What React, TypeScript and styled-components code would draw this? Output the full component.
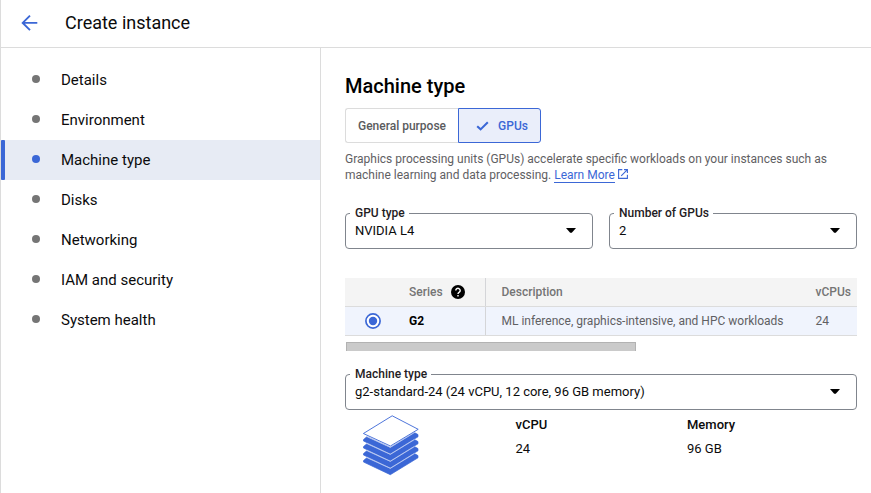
import React from "react";
import styled, { createGlobalStyle, css } from "styled-components";

const BLUE = "#3b67d6";

const GlobalStyle = createGlobalStyle`
  * { box-sizing: border-box; }
  body {
    margin: 0;
    background: #fff;
    color: #0b0b0c;
    font-family: Roboto, "Liberation Sans", sans-serif;
    overflow: hidden;
  }
`;

const Page = styled.div`
  display: flex;
  flex-direction: column;
  height: 493px;
  border-left: 1px solid #dcdcdc;
`;

const Header = styled.header`
  display: flex;
  align-items: center;
  height: 48px;
  padding: 0 0 2px 20px;
  border-bottom: 1px solid #dcdcdc;
`;

const BackIcon = styled.svg`
  width: 17px;
  height: 17px;
  margin-right: 27px;
`;

const HeaderTitle = styled.h1`
  margin: 0;
  font-size: 18px;
  font-weight: 400;
  line-height: 24px;
`;

const Body = styled.div`
  display: flex;
  flex: 1;
  min-height: 0;
`;

const Sidebar = styled.nav`
  width: 320px;
  flex: none;
  padding-top: 12px;
  border-right: 1px solid #dcdcdc;
`;

const NavItem = styled.a<{ $active?: boolean }>`
  display: flex;
  align-items: center;
  height: 40px;
  font-size: 15px;
  ${(p) => p.$active && css`background: #e7ebf4;`}
`;

const ActiveBar = styled.span<{ $active?: boolean }>`
  width: 4px;
  height: 40px;
  border-radius: 1px;
  background: ${(p) => (p.$active ? BLUE : "transparent")};
`;

const Dot = styled.span<{ $active?: boolean }>`
  width: 8px;
  height: 8px;
  margin: 0 21px 2px 27px;
  border-radius: 50%;
  background: ${(p) => (p.$active ? BLUE : "#757575")};
`;

const Main = styled.main`
  width: 536px;
  padding: 26px 0 0 24px;
`;

const Title = styled.h2`
  margin: 0;
  font-size: 20px;
  font-weight: 500;
  line-height: 24px;
  color: #000;
`;

const Toggle = styled.div`
  display: flex;
  margin-top: 10px;
`;

const ToggleButton = styled.button<{ $selected?: boolean }>`
  display: flex;
  align-items: center;
  justify-content: center;
  height: 35px;
  width: ${(p) => (p.$selected ? 83 : 113)}px;
  padding: 0;
  border: 1px solid ${(p) => (p.$selected ? BLUE : "#dcdcdc")};
  border-right-width: ${(p) => (p.$selected ? 1 : 0)}px;
  border-radius: ${(p) => (p.$selected ? "0 3px 3px 0" : "3px 0 0 3px")};
  background: ${(p) => (p.$selected ? "#eaeefa" : "#fff")};
  color: ${(p) => (p.$selected ? BLUE : "#5a5b5e")};
  font: 500 12px Roboto, sans-serif;
`;

const CheckIcon = styled.svg`
  width: 13px;
  height: 10px;
  margin: 0 9px 0 5px;
`;

const Description = styled.p`
  margin: 8px 0 0;
  color: #5f6063;
  font-size: 12px;
  line-height: 16px;
  white-space: nowrap;
`;

const LearnMore = styled.a`
  color: ${BLUE};
  border-bottom: 1px solid ${BLUE};
`;

const ExternalIcon = styled.svg`
  width: 10px;
  height: 10px;
  margin-left: 3px;
`;

const SelectRow = styled.div`
  display: grid;
  grid-template-columns: 1fr 1fr;
  gap: 16px;
  margin-top: 30px;
`;

const Select = styled.div`
  position: relative;
  display: flex;
  align-items: center;
  justify-content: space-between;
  height: 36px;
  padding: 0 16px 1px 9px;
  border: 1px solid #80858d;
  border-radius: 4px;
  font-size: 13px;
`;

const SelectLabel = styled.span`
  position: absolute;
  top: -8px;
  left: 4px;
  padding: 0 4px 0 5px;
  background: #fff;
  font-size: 12px;
  font-weight: 500;
  line-height: 14px;
  color: #1f2023;
`;

const Caret = styled.svg`
  width: 10px;
  height: 5px;
`;

const Table = styled.div`
  margin-top: 29px;
  font-size: 12px;
  color: #5f6063;
`;

const Row = styled.div<{ $head?: boolean }>`
  display: grid;
  grid-template-columns: 64px 77px 329.5px 1fr;
  height: 29px;
  border-bottom: 1px solid #dcdcdc;
  background: ${(p) => (p.$head ? "#f4f4f4" : "#f0f4fd")};
  font-weight: ${(p) => (p.$head ? 500 : 400)};
  color: ${(p) => (p.$head ? "#757575" : "#5f6063")};
`;

const Cell = styled.div<{ $divider?: boolean; $strong?: boolean }>`
  display: flex;
  align-items: center;
  white-space: nowrap;
  ${(p) => p.$divider && css`border-right: 1px solid #d4d5d8;`}
  ${(p) => p.$strong && css`color: #000; font-weight: 700;`}
`;

const DescCell = styled(Cell)`
  padding-left: 15.5px;
`;

const RadioCell = styled(Cell)`
  padding-left: 20px;
`;

const HelpIcon = styled.svg`
  width: 14px;
  height: 14px;
  margin-left: 8px;
`;

const Radio = styled.svg`
  width: 16px;
  height: 16px;
`;

const Scrollbar = styled.div`
  width: 290px;
  height: 9px;
  margin: 6px 0 23px 1px;
  background: #cacaca;
  border: 1px solid #b2b2b2;
  border-bottom: 0;
`;

const Specs = styled.div`
  display: grid;
  grid-template-columns: 170.5px 171.5px 1fr;
  padding-top: 5px;
`;

const Spec = styled.div`
  padding-top: 1px;
  font-size: 13px;
  line-height: 18px;
`;

const SpecName = styled.div`
  margin-bottom: 6px;
  font-weight: 500;
`;

const StackIcon = styled.svg`
  width: 58px;
  height: 61px;
  margin-left: 17px;
`;

const steps = [
  "Details",
  "Environment",
  "Machine type",
  "Disks",
  "Networking",
  "IAM and security",
  "System health",
];

function SelectField({ label, value }: { label: string; value: string }) {
  return (
    <Select>
      <SelectLabel>{label}</SelectLabel>
      {value}
      <Caret viewBox="0 0 10 5">
        <path d="M0 0h10L5.8 4.8H4.2z" fill="#000" />
      </Caret>
    </Select>
  );
}

export default function App() {
  return (
    <>
      <GlobalStyle />
      <Page>
        <Header>
          <BackIcon viewBox="0 0 17 17" fill="none" stroke={BLUE} strokeWidth="1.9">
            <path d="M16.3 8.9H2M9 1.6 1.7 8.9 9 16.2" />
          </BackIcon>
          <HeaderTitle>Create instance</HeaderTitle>
        </Header>
        <Body>
          <Sidebar>
            {steps.map((s) => {
              const active = s === "Machine type";
              return (
                <NavItem key={s} $active={active}>
                  <ActiveBar $active={active} />
                  <Dot $active={active} />
                  {s}
                </NavItem>
              );
            })}
          </Sidebar>
          <Main>
            <Title>Machine type</Title>
            <Toggle>
              <ToggleButton>General purpose</ToggleButton>
              <ToggleButton $selected>
                <CheckIcon viewBox="0 0 13 10" fill="none" stroke={BLUE} strokeWidth="2.1">
                  <path d="M1.2 5.3 4.6 8.4 11.8 1.3" />
                </CheckIcon>
                GPUs
              </ToggleButton>
            </Toggle>
            <Description>
              Graphics processing units (GPUs) accelerate specific workloads on your instances such as
              <br />
              machine learning and data processing. <LearnMore>Learn More</LearnMore>
              <ExternalIcon viewBox="0 0 10 10" fill="none" stroke={BLUE} strokeWidth="1.1">
                <path d="M4.3.6H.6v8.8h8.8V5.7M6 .6h3.4V4M9.4.6 3.2 6.8" />
              </ExternalIcon>
            </Description>
            <SelectRow>
              <SelectField label="GPU type" value="NVIDIA L4" />
              <SelectField label="Number of GPUs" value="2" />
            </SelectRow>
            <Table>
              <Row $head>
                <Cell />
                <Cell $divider>
                  Series
                  <HelpIcon viewBox="0 0 14 14" fill="none">
                    <circle cx="7" cy="7" r="7" fill="#000" />
                    <path d="M4.8 5.5a2.2 2.1 0 1 1 3.5 1.6C7.5 7.7 7 8 7 9" stroke="#fff" strokeWidth="1.4" />
                    <path d="M6.3 10h1.4v1.4H6.3z" fill="#fff" />
                  </HelpIcon>
                </Cell>
                <DescCell>Description</DescCell>
                <Cell>vCPUs</Cell>
              </Row>
              <Row>
                <RadioCell>
                  <Radio viewBox="0 0 16 16">
                    <circle cx="8" cy="8" r="7.1" fill="#fff" stroke={BLUE} strokeWidth="1.7" />
                    <circle cx="8" cy="8" r="4.2" fill={BLUE} />
                  </Radio>
                </RadioCell>
                <Cell $divider $strong>
                  G2
                </Cell>
                <DescCell>ML inference, graphics-intensive, and HPC workloads</DescCell>
                <Cell>24</Cell>
              </Row>
            </Table>
            <Scrollbar />
            <SelectField label="Machine type" value="g2-standard-24 (24 vCPU, 12 core, 96 GB memory)" />
            <Specs>
              <StackIcon viewBox="0 0 58 61" strokeLinejoin="round">
                {[0, 7, 14, 21].map((dy) => (
                  <g key={dy} transform={`translate(0.3 ${dy})`}>
                    <path
                      d="M1.2 24.6 4.2 22 28 32.8 52.6 17.8 55.7 19.6v2.2L28 38.7 1.2 26z"
                      fill={BLUE}
                      stroke={BLUE}
                      strokeWidth="0.7"
                    />
                    <path
                      d="M5 21.6 28 32.3 51.5 17.8"
                      fill="none"
                      stroke="#b4c4f0"
                      strokeWidth="1"
                    />
                  </g>
                ))}
                <path
                  d="M30.2 .8 56.2 14.3 28.4 31 1.4 18.5z"
                  fill="#fff"
                  stroke={BLUE}
                  strokeWidth="0.9"
                />
              </StackIcon>
              <Spec>
                <SpecName>vCPU</SpecName>
                24
              </Spec>
              <Spec>
                <SpecName>Memory</SpecName>
                96 GB
              </Spec>
            </Specs>
          </Main>
        </Body>
      </Page>
    </>
  );
}
